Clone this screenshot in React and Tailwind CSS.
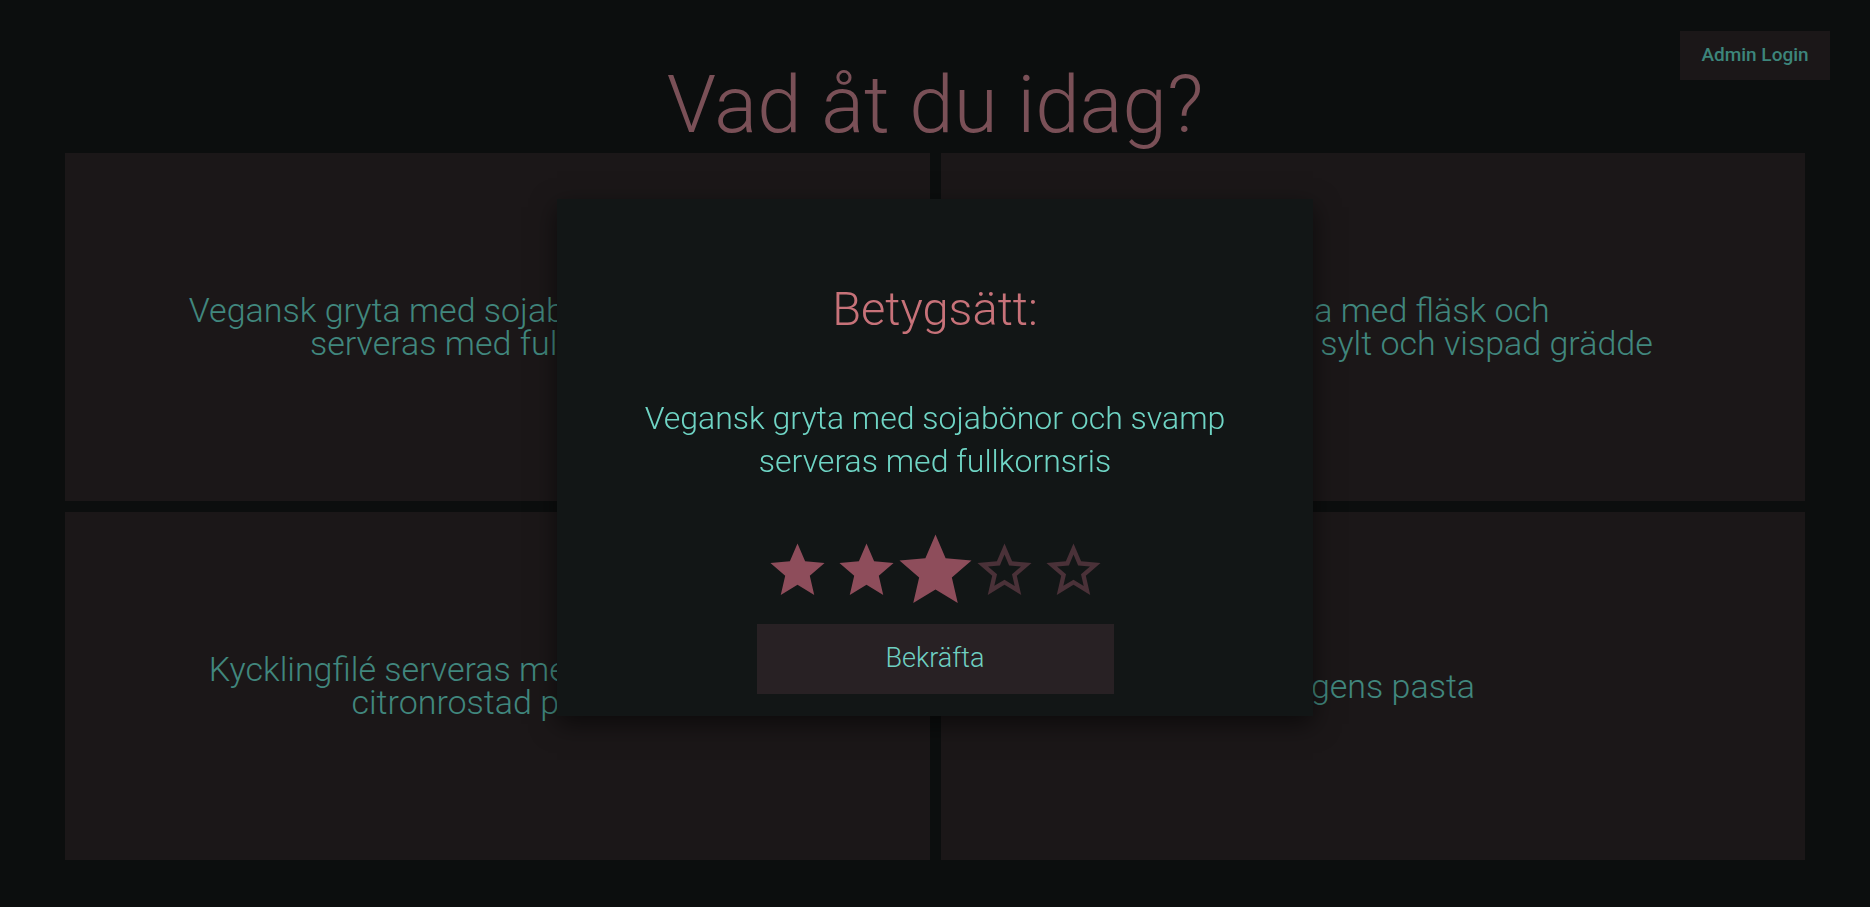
import { useState } from 'react';

const dishes = [
  { id: 1, text: 'Vegansk gryta med sojabönor och svamp\nserveras med fullkornsris' },
  { id: 2, text: 'Ärtsoppa med fläsk och\npannkaka med sylt och vispad grädde' },
  { id: 3, text: 'Kycklingfilé serveras med currysås och\ncitronrostad potatis' },
  { id: 4, text: 'Dagens pasta' },
];

const FilledStar = () => (
  <svg viewBox="0 0 24 24" className="w-[65px] h-[65px]" fill="#8e4d5b">
    <path d="M12 17.27L18.18 21l-1.64-7.03L22 9.24l-7.19-.61L12 2 9.19 8.63 2 9.24l5.46 4.73L5.82 21z" />
  </svg>
);

const EmptyStar = () => (
  <svg viewBox="0 0 24 24" className="w-[65px] h-[65px]" fill="#4a3138">
    <path d="M22 9.24l-7.19-.62L12 2 9.19 8.63 2 9.24l5.46 4.73L5.82 21 12 17.27 18.18 21l-1.63-7.03L22 9.24zM12 15.4l-3.76 2.27 1-4.28-3.32-2.88 4.38-.38L12 6.1l1.71 4.04 4.38.38-3.32 2.88 1 4.28L12 15.4z" />
  </svg>
);

const App = () => {
  const [rating, setRating] = useState(3);
  const [hover] = useState(3);

  return (
    <div
      className="relative min-h-screen bg-[#0c0e0e] pb-[48px]"
      style={{ fontFamily: 'Roboto, "Noto Sans", sans-serif' }}
    >
      {/* Admin */}
      <button className="absolute top-[31px] right-[40px] w-[150px] h-[49px] bg-[#1b1718] text-[#3d857b] text-[19px] font-medium">
        Admin Login
      </button>

      {/* Title */}
      <h1 className="pt-[57px] text-center text-[80px] leading-[96px] font-light text-[#7a5057]">
        Vad åt du idag?
      </h1>

      {/* Dishes */}
      <div className="grid grid-cols-2 gap-[11px] px-[65px]">
        {dishes.map(dish => (
          <div
            key={dish.id}
            className="h-[348px] bg-[#1b1718] flex items-center justify-center px-[50px]"
          >
            <p className="whitespace-pre-line text-center text-[34px] leading-[33px] font-light text-[#41877e]">
              {dish.text}
            </p>
          </div>
        ))}
      </div>

      {/* Rating modal */}
      <div className="fixed inset-0 flex items-center justify-center">
        <div className="mt-[7px] w-[756px] h-[517px] bg-[#121616] shadow-[0_8px_24px_rgba(0,0,0,0.55)] flex flex-col items-center px-[50px]">
          <h2 className="mt-[82px] text-[47px] leading-[56px] font-light text-[#c77279]">
            Betygsätt:
          </h2>
          <p className="mt-[60px] text-center text-[32px] leading-[43px] font-light text-[#6fd5c5]">
            Vegansk gryta med sojabönor och svamp serveras med fullkornsris
          </p>
          <div className="mt-[55px] flex gap-[4px]">
            {[1, 2, 3, 4, 5].map(n => (
              <button
                key={n}
                onClick={() => setRating(n)}
                className={n === hover ? 'scale-[1.33]' : ''}
              >
                {n <= rating ? <FilledStar /> : <EmptyStar />}
              </button>
            ))}
          </div>
          <button className="mt-[21px] w-[357px] h-[70px] bg-[#282124] text-[27px] font-light text-[#6fd0c2]">
            Bekräfta
          </button>
        </div>
      </div>
    </div>
  );
};

export default App;
